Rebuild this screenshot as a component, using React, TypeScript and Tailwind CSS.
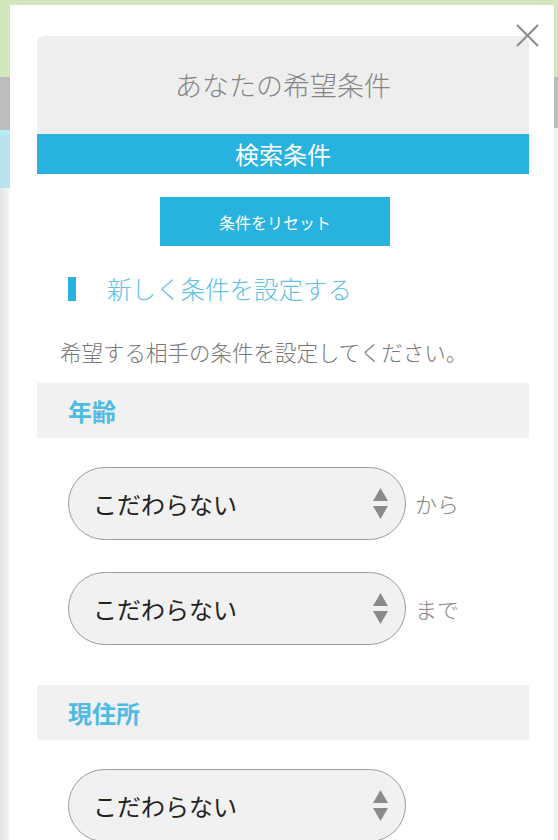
import React from "react";

const jp = { fontFamily: '"Noto Sans CJK JP", "Noto Sans", sans-serif' };

function SelectBox() {
  return (
    <div className="flex h-[73px] w-[338px] items-center justify-between rounded-full border border-[#9c9c9c] bg-[#f1f1f1] pl-[24px] pr-[17px]">
      <span className="text-[24px] leading-none text-[#222]">こだわらない</span>
      <svg width="15" height="32" viewBox="0 0 15 32">
        <polygon points="7.5,0 15,13 0,13" fill="#8a8a8a" />
        <polygon points="0,18 15,18 7.5,31" fill="#8a8a8a" />
      </svg>
    </div>
  );
}

export default function App() {
  return (
    <div className="relative h-[840px] w-[558px] overflow-hidden bg-white" style={jp}>
      {/* page behind the modal */}
      <div className="flex h-full w-full">
        <div className="flex w-[10px] flex-col">
          <div className="h-[77px] bg-[#d3e7bf]" />
          <div className="h-[53px] bg-[#bdbdbd]" />
          <div className="h-[5px] bg-[#b2eef6]" />
          <div className="h-[53px] bg-[#bbe2ee]" />
          <div className="flex-1 bg-gradient-to-r from-[#e3e3e3] to-[#f7f7f7]" />
        </div>
        <div className="flex flex-1 flex-col">
          <div className="h-[5px] bg-[#d3e7bf]" />
        </div>
        <div className="flex w-[4px] flex-col">
          <div className="h-[77px] bg-[#d3e7bf]" />
          <div className="h-[51px] bg-[#bcbcbc]" />
          <div className="flex-1 bg-[#f1f1f1]" />
        </div>
      </div>

      {/* modal */}
      <div className="absolute left-[10px] top-[5px] h-[900px] w-[544px] bg-white pl-[27px] pr-[25px] pt-[31px]">
        <button className="absolute left-[506px] top-[19px] h-[23px] w-[23px]">
          <svg width="23" height="23" viewBox="0 0 23 23">
            <line x1="1" y1="1" x2="22" y2="22" stroke="#8a8a8a" strokeWidth="2" />
            <line x1="22" y1="1" x2="1" y2="22" stroke="#8a8a8a" strokeWidth="2" />
          </svg>
        </button>

        <div className="flex h-[98px] items-center justify-center rounded-t-[8px] bg-[#eeeeee]">
          <span className="text-[27px] font-light text-[#858585]">あなたの希望条件</span>
        </div>
        <div className="flex h-[40px] items-center justify-center bg-[#27b2df]">
          <span className="text-[24px] text-white">検索条件</span>
        </div>

        <div className="mt-[23px] ml-[123px] flex h-[49px] w-[230px] items-center justify-center bg-[#27b2df]">
          <span className="text-[16px] text-white">条件をリセット</span>
        </div>

        <div className="mt-[27px] flex h-[32px] items-center pl-[31px]">
          <div className="h-[24px] w-[8px] bg-[#27b2df]" />
          <span className="ml-[31px] text-[24.5px] font-light text-[#5ec2e6]">新しく条件を設定する</span>
        </div>

        <p className="mt-[32px] pl-[23px] text-[21.5px] leading-[30px] font-light text-[#777]">
          希望する相手の条件を設定してください。
        </p>

        <div className="mt-[16px] flex h-[55px] items-center bg-[#f1f1f1] pl-[31px]">
          <span className="text-[24px] font-bold text-[#4dbbe3]">年齢</span>
        </div>

        <div className="mt-[29px] flex items-center pl-[31px]">
          <SelectBox />
          <span className="ml-[9px] text-[22px] font-light text-[#888]">から</span>
        </div>
        <div className="mt-[32px] flex items-center pl-[31px]">
          <SelectBox />
          <span className="ml-[9px] text-[22px] font-light text-[#888]">まで</span>
        </div>

        <div className="mt-[40px] flex h-[55px] items-center bg-[#f1f1f1] pl-[31px]">
          <span className="text-[24px] font-bold text-[#4dbbe3]">現住所</span>
        </div>

        <div className="mt-[29px] flex items-center pl-[31px]">
          <SelectBox />
        </div>
      </div>
    </div>
  );
}
